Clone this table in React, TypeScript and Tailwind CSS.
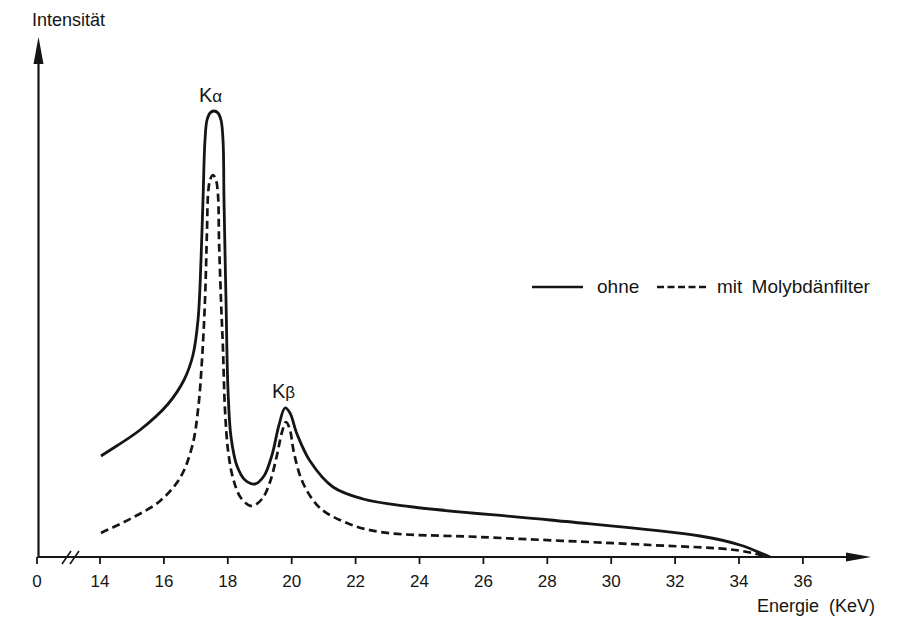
const solid: [number, number][] = [
  [101, 456], [140, 430], [168, 404], [184, 380], [193, 355], [198, 320], [201, 260],
  [203, 200], [205, 140], [207, 120], [210, 113], [214, 111], [218, 113], [221, 120], [223, 140],
  [224, 200], [226, 300], [228, 390], [231, 437], [237, 466], [245, 480], [255, 484],
  [264, 476], [272, 455], [279, 425], [285, 408], [290, 413], [297, 434], [310, 461],
  [333, 487], [363, 499], [413, 507], [550, 520], [700, 536],
  [740, 545], [770, 557],
];

const dashed: [number, number][] = [
  [101, 533], [132, 518], [160, 501], [180, 478], [192, 447], [198, 410], [202, 360],
  [205, 300], [207, 230], [208, 195], [210, 180], [213, 175], [216, 180], [218, 195],
  [219, 240], [221, 300], [223, 350], [225, 410], [228, 450], [233, 478], [241, 498],
  [252, 506], [262, 499], [270, 482], [277, 455], [282, 432], [286, 422], [290, 430],
  [294, 453], [303, 483], [320, 508], [347, 523], [380, 532], [480, 537], [650, 545],
  [735, 550], [770, 557],
];

// centripetal catmull-rom -> cubic bezier (no overshoot at uneven spacing)
function smooth(pts: [number, number][]) {
  const dist = (a: [number, number], b: [number, number]) =>
    Math.max(Math.sqrt(Math.hypot(b[0] - a[0], b[1] - a[1])), 1e-4);
  let d = `M${pts[0][0]},${pts[0][1]}`;
  for (let i = 0; i < pts.length - 1; i++) {
    const p1 = pts[i];
    const p2 = pts[i + 1];
    const p0: [number, number] = pts[i - 1] ?? [2 * p1[0] - p2[0], 2 * p1[1] - p2[1]];
    const p3: [number, number] = pts[i + 2] ?? [2 * p2[0] - p1[0], 2 * p2[1] - p1[1]];
    const d1 = dist(p0, p1);
    const d2 = dist(p1, p2);
    const d3 = dist(p2, p3);
    const c1 = [0, 1].map(
      (k) => (d1 * d1 * p2[k] - d2 * d2 * p0[k] + (2 * d1 * d1 + 3 * d1 * d2 + d2 * d2) * p1[k]) / (3 * d1 * (d1 + d2))
    );
    const c2 = [0, 1].map(
      (k) => (d3 * d3 * p1[k] - d2 * d2 * p3[k] + (2 * d3 * d3 + 3 * d3 * d2 + d2 * d2) * p2[k]) / (3 * d3 * (d3 + d2))
    );
    d += ` C${c1[0].toFixed(1)},${c1[1].toFixed(1)} ${c2[0].toFixed(1)},${c2[1].toFixed(1)} ${p2[0]},${p2[1]}`;
  }
  return d;
}

const ticks = [
  { x: 37, label: "0" },
  ...[14, 16, 18, 20, 22, 24, 26, 28, 30, 32, 34, 36].map((e) => ({
    x: 100 + (e - 14) * 31.95,
    label: String(e),
  })),
];

export default function App() {
  return (
    <div className="w-[903px] h-[627px] bg-white overflow-hidden">
      <svg
        width="903"
        height="627"
        viewBox="0 0 903 627"
        className="block text-[#151515]"
        style={{ fontFamily: '"Liberation Sans", Arial, sans-serif' }}
      >
        {/* axes */}
        <line x1="38.5" y1="557" x2="38.5" y2="60" stroke="currentColor" strokeWidth="2.2" />
        <polygon points="38.5,37 33.5,64 43.5,64" fill="currentColor" />
        <line x1="37.5" y1="557" x2="850" y2="557" stroke="currentColor" strokeWidth="2.2" />
        <polygon points="871,557 846,552.5 846,561.5" fill="currentColor" />

        {/* axis break */}
        <line x1="62" y1="564" x2="71" y2="551" stroke="currentColor" strokeWidth="1.6" />
        <line x1="70" y1="564" x2="79" y2="551" stroke="currentColor" strokeWidth="1.6" />

        {ticks.map((t) => (
          <g key={t.label}>
            <line x1={t.x} y1="557" x2={t.x} y2="564" stroke="currentColor" strokeWidth="1.8" />
            <text x={t.x} y="587" fontSize="17" textAnchor="middle" fill="currentColor">
              {t.label}
            </text>
          </g>
        ))}

        <text x="32" y="26" fontSize="18" fill="currentColor">Intensität</text>
        <text x="757" y="612" fontSize="18" fill="currentColor" wordSpacing="5">Energie (KeV)</text>

        {/* curves */}
        <path d={smooth(solid)} fill="none" stroke="currentColor" strokeWidth="2.8" strokeLinejoin="round" />
        <path
          d={smooth(dashed)}
          fill="none"
          stroke="currentColor"
          strokeWidth="2.7"
          strokeDasharray="8 4.5"
        />

        {/* peak labels */}
        <text x="199" y="102" fontSize="20" fill="currentColor">
          K<tspan fontSize="17">α</tspan>
        </text>
        <text x="272" y="398" fontSize="20" fill="currentColor">
          K<tspan fontSize="17">β</tspan>
        </text>

        {/* legend */}
        <line x1="532" y1="287" x2="583" y2="287" stroke="currentColor" strokeWidth="2.6" />
        <text x="597" y="293" fontSize="19" fill="currentColor">ohne</text>
        <line x1="657" y1="287" x2="707" y2="287" stroke="currentColor" strokeWidth="2.6" strokeDasharray="7 3.5" />
        <text x="717" y="293" fontSize="19" fill="currentColor" wordSpacing="4">mit Molybdänfilter</text>
      </svg>
    </div>
  );
}
